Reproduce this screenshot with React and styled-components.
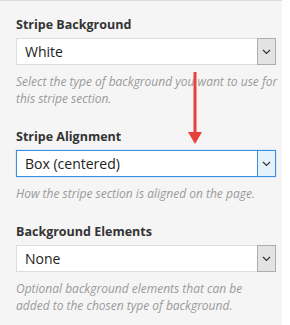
import React from "react"
import styled, { createGlobalStyle } from "styled-components"

const Global = createGlobalStyle`
    body {
        margin: 0;
        background: #fff;
        font-family: "Open Sans", "Noto Sans", sans-serif;
    }
`

let Panel = styled.div`
    position: relative;
    width: 282px;
    box-sizing: border-box;
    background: #f5f5f5;
    border-top: 1px solid #dcdcdc;
    padding: 15px 0 4px 16px;
`
let Section = styled.div`
    margin-bottom: 21px;
    &:last-child {
        margin-bottom: 0;
    }
`
let Label = styled.div`
    font-size: 12.5px;
    font-weight: 700;
    line-height: 18px;
    color: #333;
    margin-bottom: 4px;
`
let Select = styled.div`
    display: flex;
    width: 260px;
    height: 27px;
    box-sizing: border-box;
    background: #fff;
    border: 1px solid ${p => (p.focused ? "#3d8ee0" : "#ddd")};
    box-shadow: ${p => (p.focused ? "0 0 1px #7ab4ee" : "none")};
`
let Value = styled.div`
    flex: 1;
    padding-left: 8px;
    font-size: 14px;
    line-height: 25px;
    color: #222;
`
let ArrowBox = styled.div`
    width: 17px;
    margin: ${p => (p.focused ? "0" : "-1px -1px -1px 0")};
    display: flex;
    align-items: center;
    justify-content: center;
    background: ${p => (p.focused ? "#e5f1fb" : "#e3e3e3")};
    border: 1px solid ${p => (p.focused ? "#3d8ee0" : "#adadad")};
    border-width: ${p => (p.focused ? "0 0 0 1px" : "1px")};
`
let Help = styled.p`
    margin: 8px 0 0;
    font-size: 12px;
    font-style: italic;
    line-height: 17px;
    color: #9a9a9a;
    width: 262px;
`
let Pointer = styled.svg`
    position: absolute;
    left: 187px;
    top: 71px;
`

const Chevron = () => (
    <svg width="9" height="6" viewBox="0 0 9 6">
        <path d="M1 1l3.5 3.5L8 1" fill="none" stroke="#333" strokeWidth="1.2" />
    </svg>
)

const Field = ({ label, value, help, focused }) => (
    <Section>
        <Label>{label}</Label>
        <Select focused={focused}>
            <Value>{value}</Value>
            <ArrowBox focused={focused}>
                <Chevron />
            </ArrowBox>
        </Select>
        <Help>{help}</Help>
    </Section>
)

export default function App() {
    return (
        <>
            <Global />
            <Panel>
                <Field
                    label="Stripe Background"
                    value="White"
                    help="Select the type of background you want to use for this stripe section."
                />
                <Field
                    label="Stripe Alignment"
                    value="Box (centered)"
                    help="How the stripe section is aligned on the page."
                    focused
                />
                <Field
                    label="Background Elements"
                    value="None"
                    help="Optional background elements that can be added to the chosen type of background."
                />
                <Pointer width="16" height="73" viewBox="0 0 16 73">
                    <path d="M8 0v62" stroke="#e8413a" strokeWidth="3" />
                    <path d="M1 60h14l-7 12z" fill="#e8413a" />
                </Pointer>
            </Panel>
        </>
    )
}
